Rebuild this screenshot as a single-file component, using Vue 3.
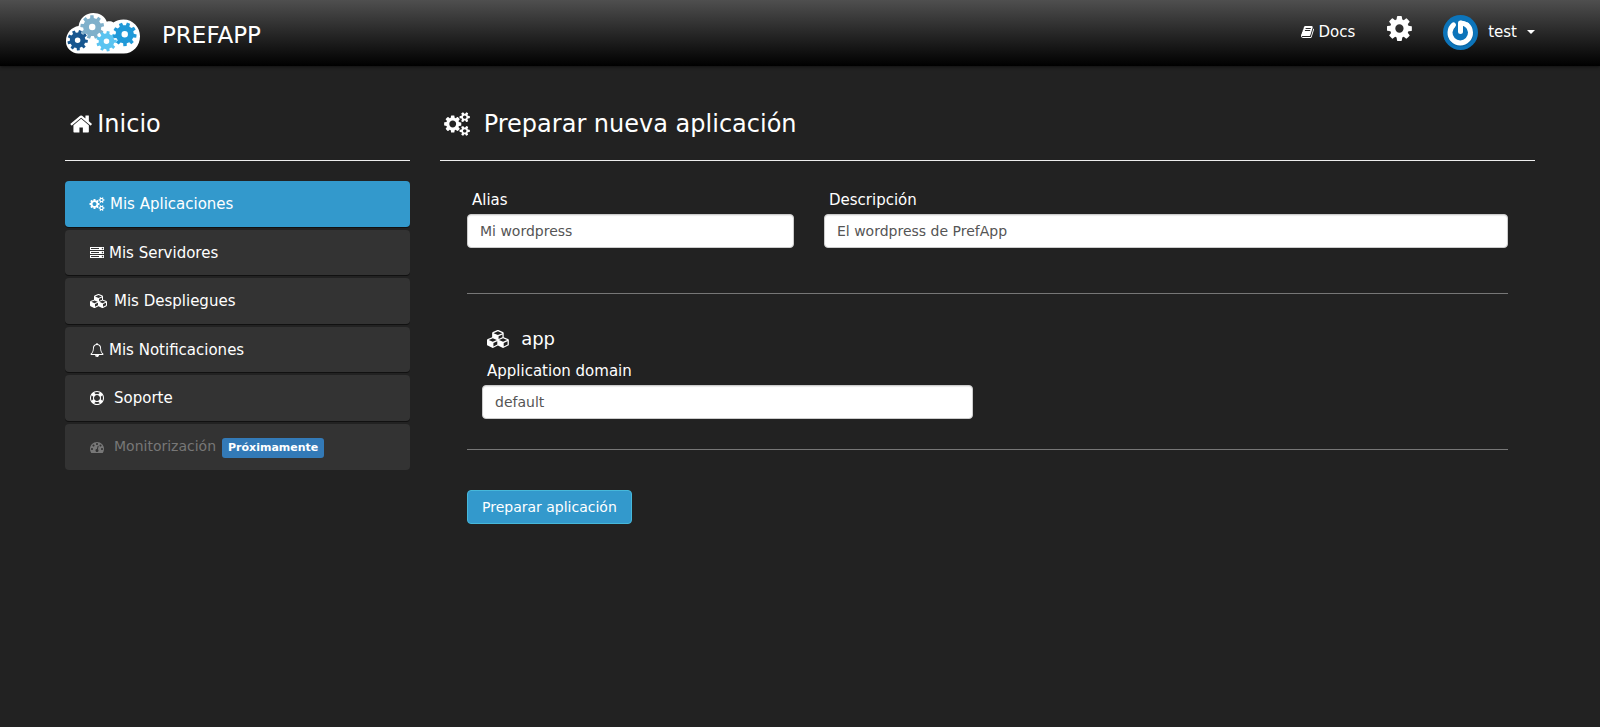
<script setup>
import { ref } from 'vue'

const alias = ref('Mi wordpress')
const description = ref('El wordpress de PrefApp')
const domain = ref('default')

const dot = 'q0-53-37.5-90.5t-90.5-37.5-90.5 37.5-37.5 90.5 37.5 90.5 90.5 37.5 90.5-37.5 37.5-90.5z'
const led = 'q0-40-28-68t-68-28-68 28-28 68 28 68 68 28 68-28 28-68z'
const smallCog = 'v140q0 16-149 31-12 27-30 52 51 113 51 138 0 4-4 7-122 71-124 71-8 0-46-47t-52-68q-20 2-30 2t-30-2q-14 21-52 68t-46 47q-2 0-124-71-4-3-4-7 0-25 51-138-18-25-30-52-149-15-149-31v-140q0-16 149-31 13-29 30-52-51-113-51-138 0-4 4-7 4-2 35-20t59-34 30-16q8 0 46 46.5t52 67.5q20-2 30-2t30 2q51-71 92-112l6-2q4 0 124 70 4 3 4 7 0 25-51 138 17 23 30 52 149 15 149 31z'

const icons = {
  home: { w: 1664, d: 'M1408 992v480q0 26-19 45t-45 19h-384v-384h-256v384h-384q-26 0-45-19t-19-45v-480q0-1 .5-3t.5-3l575-474 575 474q1 2 1 6zm223-69l-62 74q-8 9-21 11h-3q-13 0-21-7l-692-577-692 577q-12 8-24 7-13-2-21-11l-62-74q-8-10-7-23.5t11-21.5l719-599q32-26 76-26t76 26l244 204v-195q0-14 9-23t23-9h192q14 0 23 9t9 23v408l219 182q10 8 11 21.5t-7 23.5z' },
  cog: { w: 1536, d: 'M1024 896q0-106-75-181t-181-75-181 75-75 181 75 181 181 75 181-75 75-181zm512-109v222q0 12-8 23t-20 13l-185 28q-19 54-39 91 35 50 107 138 10 12 10 25t-9 23q-27 37-99 108t-94 71q-12 0-26-9l-138-108q-44 23-91 38-16 136-29 186-7 28-36 28h-222q-14 0-24.5-8.5t-11.5-21.5l-28-184q-49-16-90-37l-141 107q-10 9-25 9-14 0-25-11-126-114-165-168-7-10-7-23 0-12 8-23 15-21 51-66.5t54-70.5q-27-50-41-99l-183-27q-13-2-21-12.5t-8-23.5v-222q0-12 8-23t19-13l186-28q14-46 39-92-40-57-107-138-10-12-10-24 0-10 9-23 26-36 98.5-107.5t94.5-71.5q13 0 26 10l138 107q44-23 91-38 16-136 29-186 7-28 36-28h222q14 0 24.5 8.5t11.5 21.5l28 184q49 16 90 37l142-107q9-9 24-9 13 0 25 10 129 119 165 170 7 8 7 22 0 12-8 23-15 21-51 66.5t-54 70.5q26 50 41 98l183 28q13 2 21 12.5t8 23.5z' },
  cogs: { w: 1920, d: 'M832 896q0-106-75-181t-181-75-181 75-75 181 75 181 181 75 181-75 75-181zm768 512q0-52-38-90t-90-38-90 38-38 90q0 53 37.5 90.5t90.5 37.5 90.5-37.5 37.5-90.5zm0-1024q0-52-38-90t-90-38-90 38-38 90q0 53 37.5 90.5t90.5 37.5 90.5-37.5 37.5-90.5zm-384 421v185q0 10-7 19.5t-16 10.5l-155 24q-11 35-32 76 34 48 90 115 7 11 7 20 0 12-7 19-23 30-82.5 89.5t-78.5 59.5q-11 0-21-7l-115-90q-37 19-77 31-11 108-23 155-7 24-30 24h-186q-11 0-20-7.5t-10-17.5l-23-153q-34-10-75-31l-118 89q-7 7-20 7-11 0-21-8-144-133-144-160 0-9 7-19 10-14 41-53t47-61q-23-44-35-82l-152-24q-10-1-17-9.5t-7-19.5v-185q0-10 7-19.5t16-10.5l155-24q11-35 32-76-34-48-90-115-7-11-7-20 0-12 7-20 22-30 82-89t79-59q11 0 21 7l115 90q34-18 77-32 11-108 23-154 7-24 30-24h186q11 0 20 7.5t10 17.5l23 153q34 10 75 31l118-89q8-7 20-7 11 0 21 8 144 133 144 160 0 8-7 19-12 16-42 54t-45 60q23 48 34 82l152 23q10 2 17 10.5t7 19.5zm640 533' + smallCog + 'm0-1024' + smallCog },
  book: { w: 1664, d: 'M1639 478q40 57 18 129l-275 906q-19 64-76.5 107.5t-122.5 43.5h-923q-77 0-148.5-53.5t-99.5-131.5q-24-67-2-127 0-4 3-27t4-37q1-8-3-21.5t-3-19.5q2-11 8-21t16.5-23.5 16.5-23.5q23-38 45-91.5t30-91.5q3-10 .5-30t-.5-28q3-11 17-28t17-23q21-36 42-92t25-90q1-9-2.5-32t.5-28q4-13 22-30.5t22-22.5q19-26 42.5-84.5t27.5-96.5q1-8-3-25.5t-2-26.5q2-8 9-18t18-23 17-21q8-12 16.5-30.5t15-35 16-36 19.5-32 26.5-23.5 36-11.5 47.5 5.5l-1 3q38-9 51-9h761q74 0 114 56t18 130l-274 906q-36 119-71.5 153.5t-128.5 34.5h-869q-27 0-38 15-11 16-1 43 24 70 144 70h923q29 0 56-15.5t35-41.5l300-987q7-22 5-57 38 15 59 43zm-1064 2q-4 13 2 22.5t20 9.5h608q13 0 25.5-9.5t16.5-22.5l21-64q4-13-2-22.5t-20-9.5h-608q-13 0-25.5 9.5t-16.5 22.5zm-83 256q-4 13 2 22.5t20 9.5h608q13 0 25.5-9.5t16.5-22.5l21-64q4-13-2-22.5t-20-9.5h-608q-13 0-25.5 9.5t-16.5 22.5z' },
  server: { w: 1792, d: 'M128 1408h1024v-128h-1024v128zm0-512h1024v-128h-1024v128zm1568 448' + led + 'm-1568-960h1024v-128h-1024v128zm1568 448' + led + 'm0-512' + led + 'm96 832v384h-1792v-384h1792zm0-512v384h-1792v-384h1792zm0-512v384h-1792v-384h1792z' },
  cubes: { w: 2304, d: 'M640 1632l384-192v-314l-384 164v342zm-64-454l404-173-404-173-404 173zm1088 454l384-192v-314l-384 164v342zm-64-454l404-173-404-173-404 173zm-448-293l384-165v-266l-384 164v267zm-64-379l441-189-441-189-441 189zm1088 518v416q0 36-19 67t-52 47l-448 224q-25 14-57 14t-57-14l-448-224q-4-2-7-4-2 2-7 4l-448 224q-25 14-57 14t-57-14l-448-224q-33-16-52-47t-19-67v-416q0-38 21.5-70t56.5-48l434-186v-400q0-38 21.5-70t56.5-48l448-192q23-10 50-10t50 10l448 192q35 16 56.5 48t21.5 70v400l434 186q36 16 57 48t21 70z' },
  bell: { w: 1792, d: 'M912 1696q0-16-16-16-59 0-101.5-42.5t-42.5-101.5q0-16-16-16t-16 16q0 73 51.5 124.5t124.5 51.5q16 0 16-16zm-666-288h1300q-266-300-266-832 0-51-24-105t-69-103-121.5-80.5-169.5-31.5-169.5 31.5-121.5 80.5-69 103-24 105q0 532-266 832zm1482 0q0 52-38 90t-90 38h-448q0 106-75 181t-181 75-181-75-75-181h-448q-52 0-90-38t-38-90q50-42 91-88t85-119.5 74.5-158.5 50-206 19.5-260q0-152 117-282.5t307-158.5q-8-19-8-39 0-40 28-68t68-28 68 28 28 68q0 20-8 39 190 28 307 158.5t117 282.5q0 139 19.5 260t50 206 74.5 158.5 85 119.5 91 88z' },
  ring: { w: 1792, d: 'M896 0q182 0 348 71t286 191 191 286 71 348-71 348-191 286-286 191-348 71-348-71-286-191-191-286-71-348 71-348 191-286 286-191 348-71zm0 128q-190 0-361 90l194 194q82-28 167-28t167 28l194-194q-171-90-361-90zm-678 1129l194-194q-28-82-28-167t28-167l-194-194q-90 171-90 361t90 361zm678 407q190 0 361-90l-194-194q-82 28-167 28t-167-28l-194 194q171 90 361 90zm0-384q159 0 271.5-112.5t112.5-271.5-112.5-271.5-271.5-112.5-271.5 112.5-112.5 271.5 112.5 271.5 271.5 112.5zm484-217l194 194q90-171 90-361t-90-361l-194 194q28 82 28 167t-28 167z' },
  gauge: { w: 1792, d: 'M384 1152' + dot + 'm192-448' + dot + 'm428 481l101-382q6-26-7.5-48.5t-38.5-29.5-48 6.5-30 39.5l-101 382q-60 5-107 43.5t-63 98.5q-20 77 20 146t117 89 146-20 89-117q16-60-6-117t-72-91zm660-33' + dot + 'm-640-640' + dot + 'm448 192' + dot + 'm320 448q0 261-141 483-19 29-54 29h-1402q-35 0-54-29-141-221-141-483 0-182 71-348t191-286 286-191 348-71 348 71 286 191 191 286 71 348z' },
}

const box = (name) => `0 0 ${icons[name].w} 1792`

const menu = [
  { icon: 'cogs', text: 'Mis Aplicaciones', active: true },
  { icon: 'server', text: 'Mis Servidores' },
  { icon: 'cubes', text: 'Mis Despliegues', wide: true },
  { icon: 'bell', text: 'Mis Notificaciones' },
  { icon: 'ring', text: 'Soporte', wide: true },
  { icon: 'gauge', text: 'Monitorización', wide: true, disabled: true, badge: 'Próximamente' },
]

function gear(cx, cy, outer, teeth, turn) {
  const inner = outer * 0.76
  const hole = outer * 0.27
  const step = (Math.PI * 2) / teeth
  const points = []
  for (let i = 0; i < teeth; i++) {
    const a = turn + i * step
    for (const [offset, r] of [[-0.29, inner], [-0.2, outer], [0.2, outer], [0.29, inner]]) {
      const t = a + offset * step
      points.push(`${(cx + r * Math.cos(t)).toFixed(1)} ${(cy + r * Math.sin(t)).toFixed(1)}`)
    }
  }
  return `M${points.join('L')}ZM${cx - hole} ${cy}a${hole} ${hole} 0 1 0 ${hole * 2} 0a${hole} ${hole} 0 1 0 ${-hole * 2} 0z`
}

const gears = [
  { d: gear(79, 42, 36, 9, -0.2), fill: '#7fb0cb' },
  { d: gear(35, 82, 31, 9, 0.1), fill: '#17568f' },
  { d: gear(122, 85, 31, 9, 0), fill: '#5bc4f1' },
  { d: gear(177, 64, 36, 9, 0.15), fill: '#2199d8' },
]
</script>

<template>
  <div class="page">
    <header class="topbar">
      <a class="brand" href="#">
        <svg class="logo" viewBox="-3 0 226 123" aria-hidden="true">
          <path fill="#fff" d="M37 122A37 37 0 0 1 0 84C0 60 17 42 38 39C42 15 60 0 82 0C101 0 117 10 123 26C131 23 138 25 143 28C151 22 162 19 173 19C202 19 223 42 223 70C223 99 202 122 174 122Z" />
          <path v-for="(g, i) in gears" :key="i" :d="g.d" :fill="g.fill" fill-rule="evenodd" />
        </svg>
        <span class="brand-name">PREFAPP</span>
      </a>
      <nav class="tools">
        <a class="docs" href="#">
          <svg class="icon" :viewBox="box('book')" aria-hidden="true"><path :d="icons.book.d" /></svg>
          <span>Docs</span>
        </a>
        <button class="settings" type="button" aria-label="Configuración">
          <svg class="icon" :viewBox="box('cog')" aria-hidden="true"><path :d="icons.cog.d" /></svg>
        </button>
        <button class="user" type="button">
          <svg class="avatar" viewBox="0 0 70 70" aria-hidden="true">
            <circle cx="35" cy="35" r="35" fill="#0c74ba" />
            <g fill="none" stroke-width="10" stroke-linecap="round">
              <path stroke="#08507f" stroke-opacity=".35" d="M22 21A21 21 0 1 0 48 21M36 18V33" />
              <path stroke="#fff" d="M21 20A20.500 20.500 0 1 0 48 20" />
              <path stroke="#fff" d="M35 16V33" />
              <path stroke="#fff" stroke-linecap="butt" d="M35 16C41 16 45 18 49 21" />
            </g>
          </svg>
          <span>test</span>
          <span class="caret"></span>
        </button>
      </nav>
    </header>

    <div class="columns">
      <aside class="sidebar">
        <h1 class="title home-title">
          <svg class="icon" :viewBox="box('home')" aria-hidden="true"><path :d="icons.home.d" /></svg>
          <span>Inicio</span>
        </h1>
        <ul class="menu">
          <li v-for="item in menu" :key="item.text">
            <a href="#" class="entry" :class="{ active: item.active, disabled: item.disabled, wide: item.wide }">
              <svg class="icon" :viewBox="box(item.icon)" preserveAspectRatio="xMinYMid" aria-hidden="true"><path :d="icons[item.icon].d" /></svg>
              <span>{{ item.text }}</span>
              <span v-if="item.badge" class="badge">{{ item.badge }}</span>
            </a>
          </li>
        </ul>
      </aside>

      <main class="content">
        <h2 class="title app-title">
          <svg class="icon" :viewBox="box('cogs')" aria-hidden="true"><path :d="icons.cogs.d" /></svg>
          <span>Preparar nueva aplicación</span>
        </h2>
        <form class="form" @submit.prevent>
          <div class="row">
            <div class="field third">
              <label for="alias">Alias</label>
              <input id="alias" v-model="alias" type="text" />
            </div>
            <div class="field rest">
              <label for="description">Descripción</label>
              <input id="description" v-model="description" type="text" />
            </div>
          </div>
          <section class="service">
            <h3>
              <svg class="icon" :viewBox="box('cubes')" aria-hidden="true"><path :d="icons.cubes.d" /></svg>
              <span>app</span>
            </h3>
            <div class="field half">
              <label for="domain">Application domain</label>
              <input id="domain" v-model="domain" type="text" />
            </div>
          </section>
          <button class="submit" type="submit">Preparar aplicación</button>
        </form>
      </main>
    </div>
  </div>
</template>

<style>
body {
  background: #222;
}
</style>

<style scoped>
* {
  box-sizing: border-box;
}
.page {
  font: 14px/20px "DejaVu Sans", sans-serif;
  color: #fff;
}
a {
  color: inherit;
  text-decoration: none;
}
button {
  font: inherit;
  color: inherit;
  background: none;
  border: 0;
  padding: 0;
  cursor: pointer;
}
.icon {
  display: block;
  flex: none;
  height: 14px;
  fill: currentColor;
  overflow: visible;
}
.topbar {
  display: flex;
  justify-content: space-between;
  height: 66px;
  padding: 0 65px;
  background: linear-gradient(#4f4f4f, #000);
  box-shadow: 0 1px 3px #111;
}
.brand {
  display: flex;
  gap: 22px;
  padding-top: 13px;
}
.logo {
  width: 75px;
  height: 41px;
}
.brand-name {
  font-size: 23px;
  line-height: 45px;
}
.tools {
  display: flex;
  align-items: center;
  height: 64px;
}
.docs {
  display: flex;
  align-items: center;
  gap: 5px;
  font-size: 15px;
}
.settings {
  margin: 0 31px 0 32px;
  padding-bottom: 8px;
}
.settings .icon {
  height: 29px;
}
.user {
  display: flex;
  align-items: center;
  font-size: 15px;
}
.avatar {
  width: 35px;
  height: 35px;
  margin-right: 10px;
}
.caret {
  margin-left: 10px;
  border: 4px solid transparent;
  border-top-color: #fff;
  border-bottom: 0;
}
.columns {
  display: grid;
  grid-template-columns: calc((100% + 30px) / 4 - 30px) 1fr;
  column-gap: 30px;
  padding: 37px 65px 0;
}
.title {
  display: flex;
  align-items: center;
  height: 58px;
  margin: 0 0 20px;
  padding: 0 5px 15px;
  border-bottom: 1px solid #eee;
  font-size: 24px;
  font-weight: 400;
  line-height: 40px;
}
.title .icon {
  height: 24px;
}
.home-title {
  gap: 5px;
}
.app-title {
  gap: 13px;
}
.menu {
  display: grid;
  gap: 3px;
  margin: 0;
  padding: 0;
  list-style: none;
  font-size: 15px;
  line-height: 1.5;
}
.entry {
  display: flex;
  align-items: center;
  gap: 5px;
  padding: 12px 25px 11px;
  background: #333;
  border-radius: 4px;
  box-shadow: 0 1px #111;
}
.entry.wide {
  gap: 6px;
}
.wide .icon {
  width: 18px;
}
.entry.active {
  background: #3399cc;
}
.entry.disabled {
  padding-bottom: 12px;
  color: #777;
  font-size: 14px;
  box-shadow: none;
}
.badge {
  margin-top: 2px;
  padding: 0 6px;
  border-radius: 3px;
  background: #337ab7;
  color: #fff;
  font-size: 11px;
  font-weight: 700;
  line-height: 20px;
}
.form {
  padding: 9px 27px 0;
}
.row {
  display: flex;
  margin: 0 -15px;
  padding-bottom: 45px;
}
.field {
  padding: 0 15px;
}
.third {
  width: 33.3333%;
}
.rest {
  flex: 1;
}
.half {
  width: 50%;
}
label {
  display: block;
  margin-bottom: 4px;
  padding-left: 5px;
  font-size: 15px;
}
input {
  display: block;
  width: 100%;
  height: 34px;
  padding: 0 12px;
  border: 1px solid #ccc;
  border-radius: 4px;
  background: #fff;
  color: #555;
  font: inherit;
  box-shadow: inset 0 1px 1px rgba(0, 0, 0, 0.08);
}
.service {
  padding: 32px 0 30px;
  border: 1px solid #777;
  border-width: 1px 0;
}
h3 {
  display: flex;
  align-items: center;
  gap: 11px;
  margin: 0 0 10px;
  padding-left: 20px;
  font-size: 18px;
  font-weight: 400;
  line-height: 25px;
}
h3 .icon {
  height: 18px;
}
.submit {
  height: 34px;
  margin-top: 40px;
  padding: 0 14px;
  border: 1px solid #46b8da;
  border-radius: 4px;
  background: #3399cc;
}
</style>
